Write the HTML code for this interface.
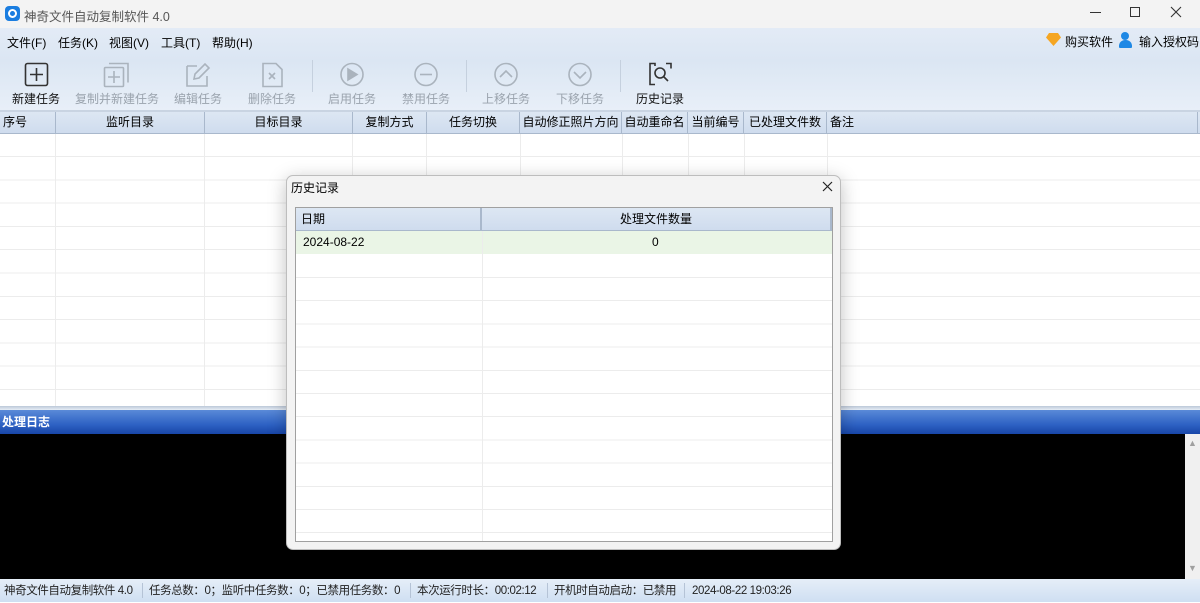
<!DOCTYPE html>
<html><head><meta charset="utf-8"><style>
*{margin:0;padding:0;box-sizing:border-box}
body{width:1200px;height:602px;position:relative;overflow:hidden;font-family:"Liberation Sans","Noto Sans CJK SC",sans-serif;font-size:12px;color:#000;background:#fff}
.a{position:absolute}
.tb{text-align:center;width:90px;font-size:12px;color:#9aa3ad}
.tb.on{color:#111}
.hd{border-right:1px solid #a9b8cc;text-align:center;line-height:21px;top:0;height:21px}
.vl{width:1px;background:#ececec}
</style></head><body>
<!-- title -->
<div class="a" style="left:0;top:0;width:1200px;height:28px;background:#f3f3f3"></div>
<div class="a" style="left:5px;top:6px;width:15px;height:15px;border-radius:4px;background:#1a7de0"><div class="a" style="left:3px;top:3px;width:9px;height:9px;border:2px solid #fff;border-radius:50%"></div></div>
<div class="a" style="left:24px;top:6px;font-size:12.5px;color:#555">神奇文件自动复制软件 4.0</div>
<div class="a" style="left:1090px;top:12px;width:11px;height:1px;background:#333"></div>
<div class="a" style="left:1130px;top:7px;width:10px;height:10px;border:1px solid #333"></div>
<svg class="a" style="left:1170px;top:6px" width="12" height="12" stroke="#333" stroke-width="1.1"><path d="M1 1l10 10M11 1L1 11"/></svg>
<!-- menu + toolbar bg -->
<div class="a" style="left:0;top:28px;width:1200px;height:82px;background:linear-gradient(#e3ebf6,#dbe6f3 40%,#e8eff8)"></div>
<div class="a" style="left:7px;top:34px;font-size:12px">文件(F)</div>
<div class="a" style="left:58px;top:34px">任务(K)</div>
<div class="a" style="left:109px;top:34px">视图(V)</div>
<div class="a" style="left:161px;top:34px">工具(T)</div>
<div class="a" style="left:212px;top:34px">帮助(H)</div>
<div class="a" style="left:1046px;top:33px;width:15px;height:13px;background:#f5a623;clip-path:polygon(20% 0,80% 0,100% 35%,50% 100%,0 35%)"></div>
<div class="a" style="left:1065px;top:33px">购买软件</div>
<div class="a" style="left:1121px;top:32px;width:8px;height:8px;border-radius:50%;background:#1e88e5"></div>
<div class="a" style="left:1119px;top:40px;width:13px;height:8px;border-radius:6px 6px 1px 1px;background:#1e88e5"></div>
<div class="a" style="left:1139px;top:33px">输入授权码</div>
<!-- toolbar icons -->
<svg class="a" style="left:0;top:56px" width="700" height="36" fill="none" stroke-width="1.6">
<g stroke="#333"><rect x="25.5" y="7.5" width="22" height="22" rx="2"/><path d="M36.5 12v13M30 18.5h13"/></g>
<g stroke="#aab3bd"><rect x="104.5" y="11.5" width="19" height="19" rx="1"/><path d="M109 7.5h19v19"/><path d="M114 15v12M108 21h12"/>
<path d="M187 10h10M187 10v20h20v-10" /><path d="M194 23l1-5 10-10 4 4-10 10z"/>
<path d="M263 7.5h13l6 6v17h-19z"/><path d="M269 17l6 6M275 17l-6 6"/>
<circle cx="352" cy="18.5" r="11"/><path d="M348 13v11l9-5.5z" fill="#aab3bd"/>
<circle cx="426" cy="18.5" r="11"/><path d="M420 18.5h12"/>
<circle cx="506" cy="18.5" r="11"/><path d="M500 21l6-6 6 6"/>
<circle cx="580" cy="18.5" r="11"/><path d="M574 16l6 6 6-6"/></g>
<g stroke="#333"><path d="M655 10v-2.5h-5v21h5M666 7.5h5v5"/><circle cx="660" cy="17" r="5"/><path d="M664 21l4 4"/></g>
<path d="M312.5 4v44M466.5 4v44M620.5 4v44" stroke="#c5d0de" stroke-width="1"/>
</svg>
<div class="a tb on" style="left:-9px;top:90px">新建任务</div>
<div class="a tb" style="left:72px;top:90px">复制并新建任务</div>
<div class="a tb" style="left:153px;top:90px">编辑任务</div>
<div class="a tb" style="left:227px;top:90px">删除任务</div>
<div class="a tb" style="left:307px;top:90px">启用任务</div>
<div class="a tb" style="left:381px;top:90px">禁用任务</div>
<div class="a tb" style="left:461px;top:90px">上移任务</div>
<div class="a tb" style="left:535px;top:90px">下移任务</div>
<div class="a tb on" style="left:615px;top:90px">历史记录</div>
<!-- table header -->
<div class="a" style="left:0;top:110px;width:1200px;height:2px;background:#c9d4e2"></div>
<div class="a" style="left:0;top:112px;width:1200px;height:22px;background:linear-gradient(#dde7f3,#cfdcee);border-bottom:1px solid #a9b8cc">
<div class="a hd" style="left:0;width:56px;text-align:left;padding-left:3px">序号</div>
<div class="a hd" style="left:56px;width:149px">监听目录</div>
<div class="a hd" style="left:205px;width:148px">目标目录</div>
<div class="a hd" style="left:353px;width:74px">复制方式</div>
<div class="a hd" style="left:427px;width:93px">任务切换</div>
<div class="a hd" style="left:520px;width:102px">自动修正照片方向</div>
<div class="a hd" style="left:622px;width:66px">自动重命名</div>
<div class="a hd" style="left:688px;width:56px">当前编号</div>
<div class="a hd" style="left:744px;width:83px">已处理文件数</div>
<div class="a hd" style="left:827px;width:371px;text-align:left;padding-left:3px;border-right:1px solid #a9b8cc">备注</div>
</div>
<!-- grid -->
<div class="a vl" style="left:55px;top:134px;height:272px"></div>
<div class="a vl" style="left:204px;top:134px;height:272px"></div>
<div class="a vl" style="left:352px;top:134px;height:272px"></div>
<div class="a vl" style="left:426px;top:134px;height:272px"></div>
<div class="a vl" style="left:520px;top:134px;height:272px"></div>
<div class="a vl" style="left:622px;top:134px;height:272px"></div>
<div class="a vl" style="left:688px;top:134px;height:272px"></div>
<div class="a vl" style="left:744px;top:134px;height:272px"></div>
<div class="a vl" style="left:827px;top:134px;height:272px"></div>
<div class="a" style="left:0;top:156px;width:1200px;height:250px;background:repeating-linear-gradient(#ececec 0 1px,transparent 1px 23.3px)"></div>
<div class="a" style="left:0;top:406px;width:1200px;height:4px;background:linear-gradient(#bcc8d8,#e6edf6)"></div>
<!-- log -->
<div class="a" style="left:0;top:410px;width:1200px;height:24px;background:linear-gradient(#5a8ad8,#2e62c4 60%,#1846a8);color:#fff;font-weight:bold;font-size:12px;line-height:24px;padding-left:2px">处理日志</div>
<div class="a" style="left:0;top:434px;width:1185px;height:145px;background:#000"></div>
<div class="a" style="left:1185px;top:434px;width:15px;height:145px;background:#f0f0f0;color:#a0a0a0;font-size:9px;text-align:center"><div style="margin-top:4px">▲</div><div style="margin-top:115px">▼</div></div>
<!-- status -->
<div class="a" style="left:0;top:579px;width:1200px;height:23px;background:linear-gradient(#e6eef8,#cfdff2);line-height:24px;font-size:11.5px;color:#222;white-space:nowrap;letter-spacing:-0.4px">
<span class="a" style="left:4px">神奇文件自动复制软件 4.0</span>
<span class="a" style="left:142px;top:4px;width:1px;height:15px;background:#b5c3d6"></span>
<span class="a" style="left:149px">任务总数：0；监听中任务数：0；已禁用任务数：0</span>
<span class="a" style="left:410px;top:4px;width:1px;height:15px;background:#b5c3d6"></span>
<span class="a" style="left:417px">本次运行时长：00:02:12</span>
<span class="a" style="left:547px;top:4px;width:1px;height:15px;background:#b5c3d6"></span>
<span class="a" style="left:554px">开机时自动启动：已禁用</span>
<span class="a" style="left:684px;top:4px;width:1px;height:15px;background:#b5c3d6"></span>
<span class="a" style="left:692px">2024-08-22 19:03:26</span>
</div>
<!-- dialog -->
<div class="a" style="left:286px;top:175px;width:555px;height:375px;background:#f3f3f3;border:1px solid #bdbdbd;border-radius:7px;box-shadow:0 4px 18px rgba(0,0,0,.25)">
<div class="a" style="left:4px;top:3px;font-size:12px">历史记录</div>
<svg class="a" style="left:535px;top:5px" width="11" height="11" stroke="#222" stroke-width="1.2"><path d="M1 1l9 9M10 1L1 10"/></svg>
<div class="a" style="left:8px;top:31px;width:538px;height:335px;background:#fff;border:1px solid #a0a0a0">
<div class="a" style="left:0;top:0;width:536px;height:23px;background:linear-gradient(#dde7f3,#cfdcee);border-bottom:1px solid #a9b8cc;line-height:23px">
<div class="a" style="left:0;width:186px;height:23px;border-right:2px solid #a9b8cc;padding-left:5px">日期</div>
<div class="a" style="left:186px;width:350px;text-align:center;border-right:2px solid #a9b8cc;height:23px">处理文件数量</div></div>
<div class="a" style="left:0;top:23px;width:536px;height:23px;background:#eaf5e6;line-height:23px"><span class="a" style="left:7px">2024-08-22</span><span class="a" style="left:356px">0</span></div>
<div class="a" style="left:186px;top:23px;width:1px;height:310px;background:#ececec"></div>
<div class="a" style="left:0;top:69px;width:536px;height:266px;background:repeating-linear-gradient(#ececec 0 1px,transparent 1px 23.2px)"></div>
</div></div>
</body></html>
